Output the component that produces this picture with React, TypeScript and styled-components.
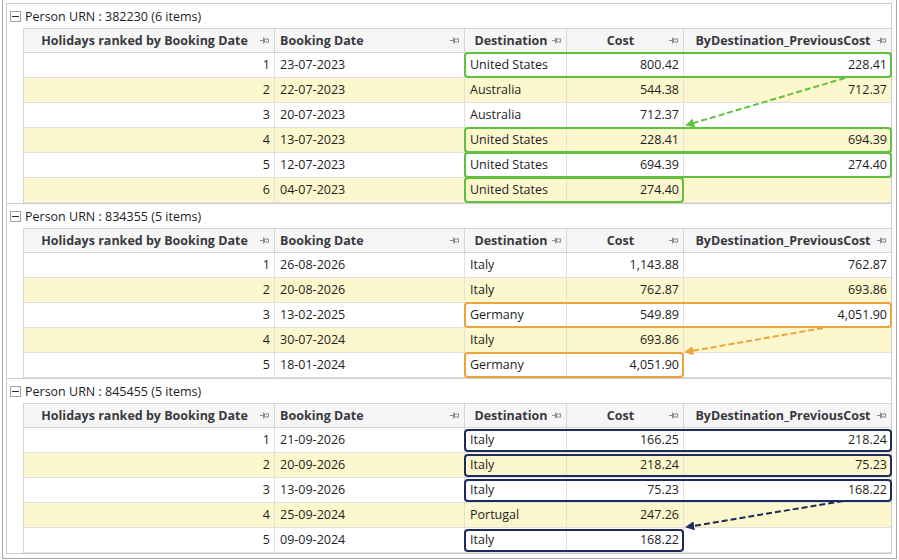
import * as React from "react";
import styled, {createGlobalStyle} from "styled-components";

const GlobalStyle = createGlobalStyle`
  body {
    margin: 0;
    background: #ffffff;
    font-family: "Open Sans", "Noto Sans", "Liberation Sans", sans-serif;
    font-size: 12.5px;
    color: #1e1e1e;
  }
`

type Row = [string, string, string, string, string];

type Mark = { row: number; wide: boolean };

type Group = {
    urn: string;
    rows: Row[];
    color: string;
    tight: boolean;
    marks: Mark[];
    arrow: [number, number, number, number];
};

const groups: Group[] = [
    {
        urn: "382230",
        color: "#5fc13f",
        tight: false,
        rows: [
            ["1", "23-07-2023", "United States", "800.42", "228.41"],
            ["2", "22-07-2023", "Australia", "544.38", "712.37"],
            ["3", "20-07-2023", "Australia", "712.37", ""],
            ["4", "13-07-2023", "United States", "228.41", "694.39"],
            ["5", "12-07-2023", "United States", "694.39", "274.40"],
            ["6", "04-07-2023", "United States", "274.40", ""],
        ],
        marks: [{row: 0, wide: true}, {row: 3, wide: true}, {row: 4, wide: true}, {row: 5, wide: false}],
        arrow: [821, 49, 663, 96],
    },
    {
        urn: "834355",
        color: "#eba53b",
        tight: false,
        rows: [
            ["1", "26-08-2026", "Italy", "1,143.88", "762.87"],
            ["2", "20-08-2026", "Italy", "762.87", "693.86"],
            ["3", "13-02-2025", "Germany", "549.89", "4,051.90"],
            ["4", "30-07-2024", "Italy", "693.86", ""],
            ["5", "18-01-2024", "Germany", "4,051.90", ""],
        ],
        marks: [{row: 2, wide: true}, {row: 4, wide: false}],
        arrow: [799, 99, 662, 123],
    },
    {
        urn: "845455",
        color: "#1f2a5c",
        tight: true,
        rows: [
            ["1", "21-09-2026", "Italy", "166.25", "218.24"],
            ["2", "20-09-2026", "Italy", "218.24", "75.23"],
            ["3", "13-09-2026", "Italy", "75.23", "168.22"],
            ["4", "25-09-2024", "Portugal", "247.26", ""],
            ["5", "09-09-2024", "Italy", "168.22", ""],
        ],
        marks: [{row: 0, wide: true}, {row: 1, wide: true}, {row: 2, wide: true}, {row: 4, wide: false}],
        arrow: [819, 97, 663, 123],
    },
];

type Align = "left" | "center" | "right";

const columns: { title: string; head: Align; body: Align }[] = [
    {title: "Holidays ranked by Booking Date", head: "center", body: "right"},
    {title: "Booking Date", head: "left", body: "left"},
    {title: "Destination", head: "center", body: "left"},
    {title: "Cost", head: "center", body: "right"},
    {title: "ByDestination_PreviousCost", head: "center", body: "right"},
];

const Frame = styled.div`
  box-sizing: border-box;
  margin-left: 2px;
  width: 895px;
  height: 559px;
  padding: 3px 4px 4px 3px;
  border: 1px solid #a9a9a9;
  border-top: none;
`

const GroupPanel = styled.div`
  border: 1px solid #cbcbcb;
`

const GroupBlock = styled.section`
  & + & {
    border-top: 1px solid #cbcbcb;
  }
`

const GroupHeader = styled.div`
  display: flex;
  align-items: center;
  gap: 4px;
  height: 24px;
  padding-left: 3px;
  color: #1e1e1e;
`

const CollapseBox = styled.span`
  box-sizing: border-box;
  width: 11px;
  height: 11px;
  border: 1px solid #a2a2a2;
  background: #ffffff;
  display: flex;
  align-items: center;
  justify-content: center;

  &::after {
    content: "";
    width: 7px;
    height: 1px;
    background: #2a2a2a;
  }
`

const Table = styled.div`
  position: relative;
  margin-left: 16px;
  border-left: 1px solid #d4d4d4;
  border-top: 1px solid #d4d4d4;
`

const GridRow = styled.div<{ $alt?: boolean }>`
  display: grid;
  grid-template-columns: 251px 190px 102px 117px 1fr;
  background: ${p => (p.$alt ? "#fdf7cd" : "#ffffff")};
`

const HeadCell = styled.div<{ $align: Align }>`
  box-sizing: border-box;
  height: 24px;
  display: flex;
  align-items: center;
  padding: 0 4px 0 5px;
  background: #f6f6f6;
  border-right: 1px solid #d4d4d4;
  border-bottom: 1px solid #d4d4d4;
  font-weight: 700;
  color: #393941;
  white-space: nowrap;

  &:last-child {
    border-right: none;
  }

  span {
    flex: 1;
    text-align: ${p => p.$align};
  }
`

const Cell = styled.div<{ $align: Align }>`
  box-sizing: border-box;
  height: 25px;
  line-height: 24px;
  padding: 0 4px 0 5px;
  border-right: 1px solid #e0e0e0;
  border-bottom: 1px solid #e0e0e0;
  text-align: ${p => p.$align};
  white-space: nowrap;

  &:last-child {
    border-right: none;
  }
`

const Highlight = styled.div<{ $row: number; $wide: boolean; $color: string; $tight: boolean }>`
  position: absolute;
  box-sizing: border-box;
  left: 440px;
  top: ${p => 23 + p.$row * 25 + (p.$tight ? 2 : 0)}px;
  height: ${p => (p.$tight ? 23 : 26)}px;
  width: ${p => (p.$wide ? 428 : 220)}px;
  border: 2px solid ${p => p.$color};
  border-radius: 4px;
  pointer-events: none;
`

const Overlay = styled.svg`
  position: absolute;
  left: 0;
  top: 0;
  width: 100%;
  height: 100%;
  overflow: visible;
  pointer-events: none;
`

const Pin = () => (
    <svg width="10" height="7" viewBox="0 0 10 7" fill="none" stroke="#8a8a8a" strokeWidth="1">
        <path d="M0 3.5H3.5M3.5 0.5V6.5"/>
        <rect x="4.5" y="2" width="4" height="3"/>
    </svg>
);

const GroupView = ({group, index}: { group: Group; index: number }) => {
    const [x1, y1, x2, y2] = group.arrow;
    const id = `arrow${index}`;
    return (
        <GroupBlock>
            <GroupHeader>
                <CollapseBox/>
                <span>Person URN : {group.urn} ({group.rows.length} items)</span>
            </GroupHeader>
            <Table>
                <GridRow>
                    {columns.map(c => (
                        <HeadCell key={c.title} $align={c.head}>
                            <span>{c.title}</span>
                            <Pin/>
                        </HeadCell>
                    ))}
                </GridRow>
                {group.rows.map((r, i) => (
                    <GridRow key={i} $alt={i % 2 === 1}>
                        {r.map((v, j) => (
                            <Cell key={j} $align={columns[j].body}>{v}</Cell>
                        ))}
                    </GridRow>
                ))}
                {group.marks.map(m => (
                    <Highlight key={m.row} $row={m.row} $wide={m.wide} $color={group.color} $tight={group.tight}/>
                ))}
                <Overlay>
                    <defs>
                        <marker id={id} viewBox="0 0 10 10" refX="8" refY="5" markerWidth="4.5" markerHeight="4.5"
                                orient="auto">
                            <path d="M0 0L10 5L0 10z" fill={group.color}/>
                        </marker>
                    </defs>
                    <line x1={x1} y1={y1} x2={x2} y2={y2} stroke={group.color} strokeWidth="2"
                          strokeDasharray="6 3" markerEnd={`url(#${id})`}/>
                </Overlay>
            </Table>
        </GroupBlock>
    );
};

const App = () => (
    <>
        <GlobalStyle/>
        <Frame>
            <GroupPanel>
                {groups.map((g, i) => <GroupView key={g.urn} group={g} index={i}/>)}
            </GroupPanel>
        </Frame>
    </>
);

export default App;
